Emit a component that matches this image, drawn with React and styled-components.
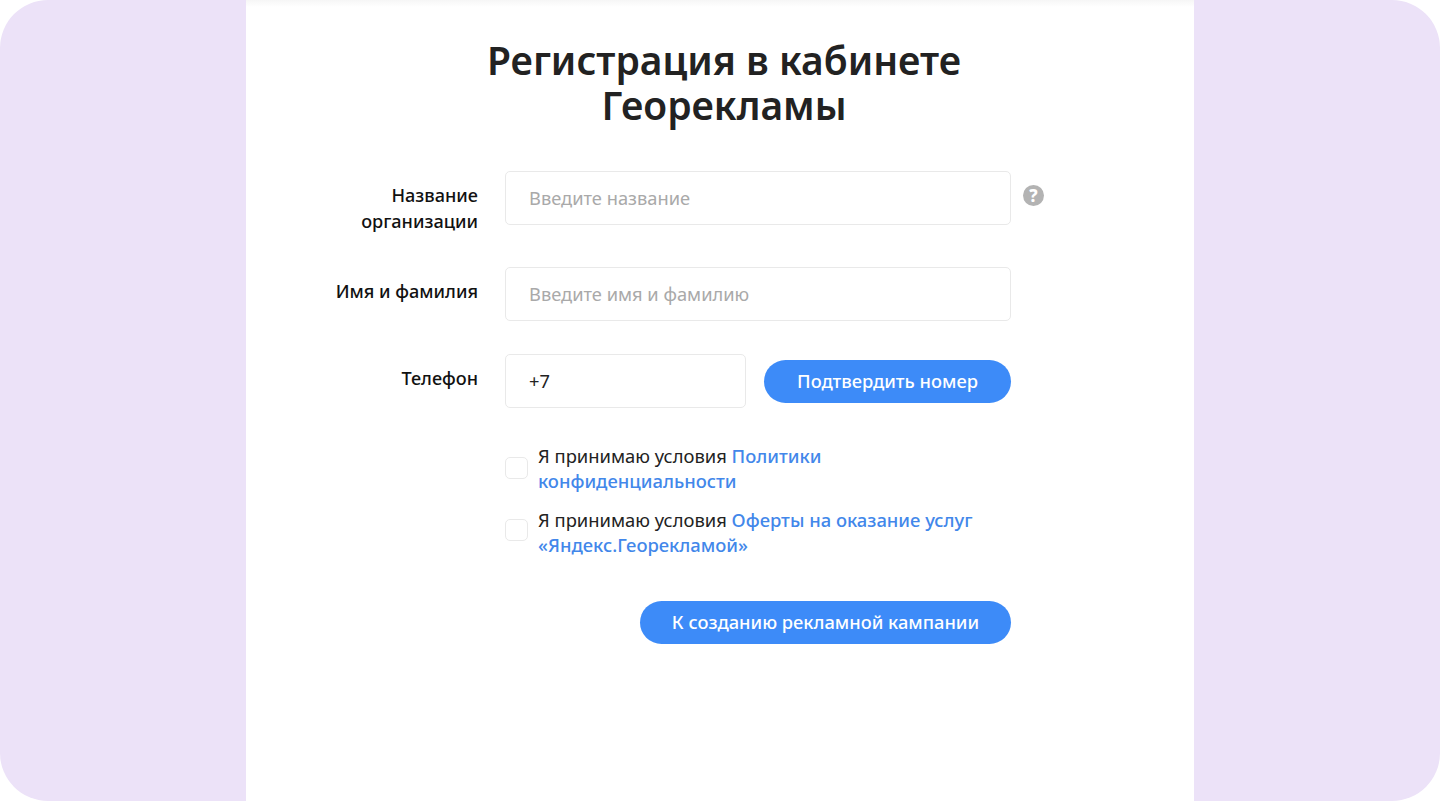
import React from "react";
import styled, { createGlobalStyle } from "styled-components";

const GlobalStyle = createGlobalStyle`
  html, body {
    margin: 0;
    background: #fff;
  }
  * {
    box-sizing: border-box;
  }
`;

const Frame = styled.div`
  width: 1440px;
  height: 801px;
  background: #ece2f8;
  border-radius: 48px;
  overflow: hidden;
  display: flex;
  justify-content: center;
  font-family: "Noto Sans", "Open Sans", sans-serif;
  color: #222;
`;

const Panel = styled.main`
  width: 948px;
  height: 100%;
  background: linear-gradient(#f6f6f6, #fff 7px);
  padding-top: 37px;
`;

const Title = styled.h1`
  margin: 0 0 44px 8px;
  font-size: 39px;
  line-height: 45px;
  font-weight: 600;
  text-align: center;
  color: #222;
`;

const Form = styled.form`
  display: grid;
  grid-template-columns: 232px 506px 1fr;
  column-gap: 27px;
  align-items: start;
`;

const Label = styled.label`
  padding-top: 12px;
  text-align: right;
  font-size: 18.1px;
  line-height: 25.5px;
  font-weight: 500;
  color: #111;
`;

const Field = styled.div`
  display: flex;
  align-items: center;
  gap: 18px;
  margin-bottom: ${(props) => props.$gap || 0}px;
`;

const Input = styled.input`
  width: ${(props) => props.$width || "100%"};
  height: 54px;
  flex: none;
  padding: 0 23px 2px;
  border: 1px solid #e9e9e9;
  border-radius: 5px;
  background: #fff;
  font: 400 18.3px "Noto Sans", sans-serif;
  color: #222;
  outline: none;

  &::placeholder {
    color: #a9a9a9;
    opacity: 1;
  }
`;

const Hint = styled.span`
  width: 21px;
  height: 21px;
  margin: 14px 0 0 -15px;
  border-radius: 50%;
  background: #b3b3b3;
  color: #fff;
  display: flex;
  align-items: center;
  justify-content: center;
  font-size: 17px;
  line-height: 1;
  font-weight: 800;
`;

const Button = styled.button`
  height: 43px;
  width: ${(props) => props.$width}px;
  flex: none;
  border: 0;
  border-radius: 22px;
  padding: 0 0 3px;
  background: #3d8bf8;
  color: #fff;
  font: 500 18.3px "Noto Sans", sans-serif;
  margin-top: 1px;
`;

const Agreements = styled.div`
  grid-column: 2;
  display: flex;
  flex-direction: column;
  gap: 15px;
  margin-top: 36px;
`;

const Agreement = styled.div`
  display: flex;
  align-items: center;
  gap: 10px;
  font-size: 18.4px;
  line-height: 24.5px;
  color: #222;
`;

const Checkbox = styled.span`
  width: 23px;
  height: 22px;
  flex: none;
  margin-top: ${(props) => props.$top}px;
  border: 1px solid #e9e9e9;
  border-radius: 5px;
  background: #fff;
`;

const AgreementText = styled.span`
  max-width: 445px;
`;

const DocLink = styled.a`
  color: #4287ea;
  font-weight: 500;
  text-decoration: none;
`;

const Actions = styled.div`
  grid-column: 2;
  display: flex;
  justify-content: flex-end;
  margin-top: 43px;
`;

export default function App() {
  return (
    <>
      <GlobalStyle />
      <Frame>
        <Panel>
          <Title>
            Регистрация в кабинете
            <br />
            Георекламы
          </Title>
          <Form>
            <Label>
              Название
              <br />
              организации
            </Label>
            <Field $gap={42}>
              <Input placeholder="Введите название" />
            </Field>
            <Hint>?</Hint>

            <Label>Имя и фамилия</Label>
            <Field $gap={33}>
              <Input placeholder="Введите имя и фамилию" />
            </Field>
            <span />

            <Label>Телефон</Label>
            <Field>
              <Input $width="241px" defaultValue="+7" />
              <Button type="button" $width={247}>
                Подтвердить номер
              </Button>
            </Field>
            <span />

            <Agreements>
              <Agreement>
                <Checkbox $top={-2} />
                <AgreementText>
                  Я принимаю условия <DocLink href="#">Политики конфиденциальности</DocLink>
                </AgreementText>
              </Agreement>
              <Agreement>
                <Checkbox $top={-5} />
                <AgreementText>
                  Я принимаю условия{" "}
                  <DocLink href="#">Оферты на оказание услуг «Яндекс.Георекламой»</DocLink>
                </AgreementText>
              </Agreement>
            </Agreements>

            <Actions>
              <Button type="button" $width={371}>
                К созданию рекламной кампании
              </Button>
            </Actions>
          </Form>
        </Panel>
      </Frame>
    </>
  );
}
